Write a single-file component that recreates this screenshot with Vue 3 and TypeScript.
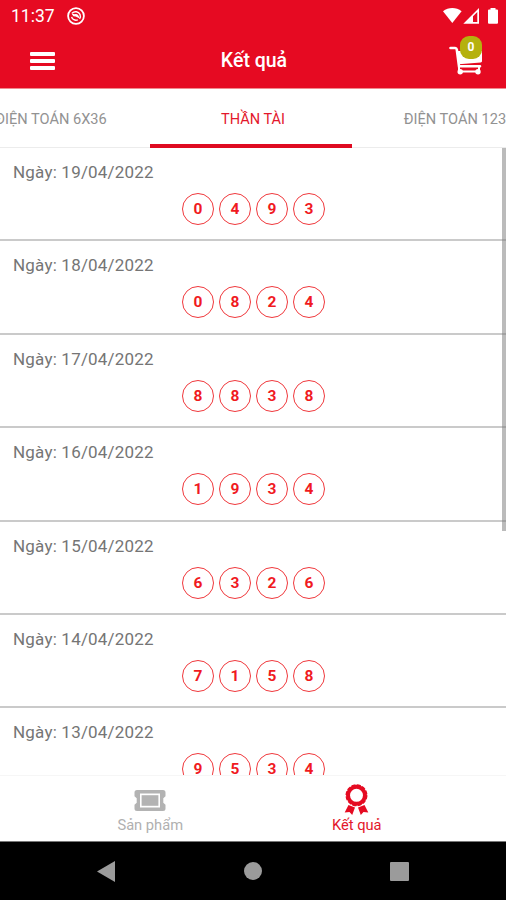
<script setup lang="ts">
interface Result {
  date: string
  digits: number[]
}

const results: Result[] = [
  { date: '19/04/2022', digits: [0, 4, 9, 3] },
  { date: '18/04/2022', digits: [0, 8, 2, 4] },
  { date: '17/04/2022', digits: [8, 8, 3, 8] },
  { date: '16/04/2022', digits: [1, 9, 3, 4] },
  { date: '15/04/2022', digits: [6, 3, 2, 6] },
  { date: '14/04/2022', digits: [7, 1, 5, 8] },
  { date: '13/04/2022', digits: [9, 5, 3, 4] },
]

const cartCount = 0
</script>

<template>
  <div class="screen">
    <header class="top">
      <div class="status">
        <span class="clock">11:37</span>
        <svg class="notice" width="18" height="18" viewBox="0 0 18 18" fill="none" stroke="#fff">
          <circle cx="9" cy="9" r="7.9" stroke-width="1.8" />
          <path d="M5 6.2C7.5 3.8 11.5 4.4 13 7.4C13.6 8.8 13.4 10.6 12.6 11.8M4.6 9.8C5.2 12.4 8 14 10.8 12.9" stroke-width="1.4" />
          <path d="M4.4 6.6L8 7.2C10 6.6 11.8 8 12.6 11.6L8.6 9.4L6.4 9.2Z" fill="#fff" stroke="none" />
        </svg>
        <div class="signals">
          <svg width="56" height="18" viewBox="0 0 56 18" fill="#fff">
            <path d="M0 4.3C5.4-.1 13.2-.1 18.6 4.3L9.3 16Z" />
            <path fill-rule="evenodd" d="M20.3 16.7L36 1V16.7ZM30 9.2V15H34.3V5Z" />
            <path d="M46 2.6H47.5V.9H52.5V2.6H54Q55 2.6 55 3.6V15.7Q55 16.7 54 16.7H46Q45 16.7 45 15.7V3.6Q45 2.6 46 2.6Z" />
          </svg>
        </div>
      </div>
      <div class="appbar">
        <button class="menu" aria-label="Menu"><i></i><i></i><i></i></button>
        <h1>Kết quả</h1>
        <div class="cart">
          <svg width="34" height="29" viewBox="0 0 34 29" fill="none" stroke="#fff">
            <path d="M1.5 2H6.2Q7.5 2 7.8 3.5L10 20.3H31" stroke-width="2.6" stroke-linecap="round" />
            <path d="M7.8 5H33V15.2Q33 16.3 31.8 16.4L9.8 18.2Z" fill="#fff" stroke="none" />
            <path d="M10 20V25.5H30V20" stroke-width="2" />
            <circle cx="11.2" cy="25.7" r="2.7" fill="#fff" stroke="none" />
            <circle cx="29" cy="25.7" r="2.7" fill="#fff" stroke="none" />
          </svg>
          <span class="badge">{{ cartCount }}</span>
        </div>
      </div>
    </header>

    <nav class="tabs">
      <span class="tab">ĐIỆN TOÁN 6X36</span>
      <span class="tab active">THẦN TÀI</span>
      <span class="tab">ĐIỆN TOÁN 123</span>
    </nav>

    <main class="list">
      <section v-for="item in results" :key="item.date" class="row">
        <p class="date">Ngày: {{ item.date }}</p>
        <div class="balls">
          <span v-for="(digit, i) in item.digits" :key="i" class="ball">{{ digit }}</span>
        </div>
      </section>
      <div class="scrollbar"></div>
    </main>

    <footer class="bottom">
      <div class="item">
        <svg width="32" height="22" viewBox="0 0 32 22">
          <path fill="#b3b3b3" fill-rule="evenodd" d="M3 0H29Q31.5 0 31.5 2.5V6.3L29.3 8.3V12.7L31.5 14.7V18.5Q31.5 21 29 21H3Q.5 21 .5 18.5V14.7L2.7 12.7V8.3L.5 6.3V2.5Q.5 0 3 0ZM6 3.5V17.5H26V3.5Z" />
          <rect x="7.6" y="5.2" width="16.8" height="10.6" fill="#b3b3b3" />
        </svg>
        <span>Sản phẩm</span>
      </div>
      <div class="item current">
        <svg width="26" height="32" viewBox="0 0 26 32" fill="#e50b22">
          <circle cx="13.5" cy="11.3" r="8.5" fill="none" stroke="#e50b22" stroke-width="4" />
          <circle cx="13.5" cy="11.3" r="10.2" fill="none" stroke="#e50b22" stroke-width="1.6" stroke-dasharray="4 1.34" />
          <path d="M5.5 21L12 23.5L9.2 31L6.5 28L1.7 28.5Z" />
          <path d="M21.5 21L15 23.5L17.8 31L20.5 28L25.3 28.5Z" />
        </svg>
        <span>Kết quả</span>
      </div>
    </footer>

    <div class="system">
      <svg width="18" height="21" viewBox="0 0 18 21"><path d="M0 10.5L18 0V21Z" fill="#9b9b9b" /></svg>
      <i class="home"></i>
      <i class="recent"></i>
    </div>
  </div>
</template>

<style>
body {
  margin: 0;
  background: #fff;
}
</style>

<style scoped>
.screen {
  width: 506px;
  height: 900px;
  display: flex;
  flex-direction: column;
  overflow: hidden;
  background: #fff;
  font-family: Roboto, "Liberation Sans", sans-serif;
}
.top {
  height: 89px;
  flex: none;
  background: #e60a22;
  border-bottom: 1px solid #f08a8f;
  box-sizing: border-box;
  color: #fff;
}
.status {
  height: 32px;
  display: flex;
  align-items: center;
  padding: 0 5px 0 11px;
}
.clock {
  width: 56px;
  font-size: 17.5px;
  line-height: 32px;
}
.notice {
  margin-top: -1px;
}
.signals {
  margin-left: auto;
  height: 18px;
  margin-top: -1px;
  width: 58px;
}
.appbar {
  height: 56px;
  display: grid;
  grid-template-columns: 100px 1fr 100px;
  align-items: center;
}
.menu {
  width: 25px;
  margin: 1px 0 0 30px;
  padding: 0;
  border: 0;
  background: none;
  display: flex;
  flex-direction: column;
  gap: 3px;
}
.menu i {
  height: 4px;
  border-radius: 1px;
  background: #fff;
}
h1 {
  margin: 0;
  padding: 1px 0 0 2px;
  text-align: center;
  font-size: 19.5px;
  line-height: 28px;
  font-weight: 500;
}
.cart {
  position: relative;
  height: 29px;
  margin-left: 43px;
}
.badge {
  position: absolute;
  left: 11px;
  top: -10px;
  width: 22px;
  height: 23px;
  border-radius: 9px;
  background: #b5b10e;
  font-size: 12px;
  line-height: 23px;
  font-weight: 700;
  text-align: center;
}
.tabs {
  height: 59px;
  flex: none;
  display: flex;
  justify-content: center;
  box-sizing: border-box;
  border-bottom: 1px solid #ececec;
  margin-left: -4px;
}
.tab {
  width: 202px;
  flex: none;
  height: 59px;
  box-sizing: border-box;
  border-bottom: 4px solid transparent;
  padding-left: 4px;
  text-align: center;
  font-size: 14.6px;
  line-height: 60px;
  color: #929292;
  white-space: nowrap;
}
.active {
  color: #e3172c;
  border-bottom-color: #df0a21;
}
.list {
  position: relative;
  height: 627px;
  flex: none;
  overflow: hidden;
}
.row {
  height: 93.4px;
  box-sizing: border-box;
  padding: 12px 0 0 13px;
  border-bottom: 2px solid #cacaca;
}
.date {
  margin: 0;
  font-size: 17px;
  line-height: 24px;
  letter-spacing: 0.2px;
  color: #757575;
}
.balls {
  display: flex;
  justify-content: center;
  gap: 5px;
  margin: 9px 12px 0 0;
}
.ball {
  width: 32px;
  height: 32px;
  box-sizing: border-box;
  border: 1px solid #f0383c;
  border-radius: 50%;
  text-align: center;
  font-size: 15.5px;
  line-height: 30px;
  font-weight: 700;
  color: #f01a1f;
}
.scrollbar {
  position: absolute;
  right: 0;
  top: 0;
  width: 4px;
  height: 383px;
  background: rgba(120, 120, 120, 0.5);
}
.bottom {
  height: 66px;
  flex: none;
  display: flex;
  justify-content: center;
  box-sizing: border-box;
  border-top: 1px solid #f6f6f6;
}
.item {
  width: 206.5px;
  display: flex;
  flex-direction: column;
  align-items: center;
  color: #b0b0b0;
  font-size: 14.7px;
  line-height: 18px;
}
.item svg {
  margin-top: 14px;
  margin-bottom: 4px;
}
.item span {
  padding-left: 1px;
}
.current {
  color: #e3172c;
}
.current svg {
  margin-top: 8px;
  margin-bottom: 0;
}
.system {
  flex: 1;
  display: flex;
  align-items: center;
  justify-content: space-between;
  padding: 0 97px;
  border-top: 1px solid #777;
  background: #000;
}
.home {
  width: 18px;
  height: 18px;
  border-radius: 50%;
  background: #9b9b9b;
}
.recent {
  width: 19px;
  height: 19px;
  border-radius: 1px;
  background: #9b9b9b;
}
</style>
